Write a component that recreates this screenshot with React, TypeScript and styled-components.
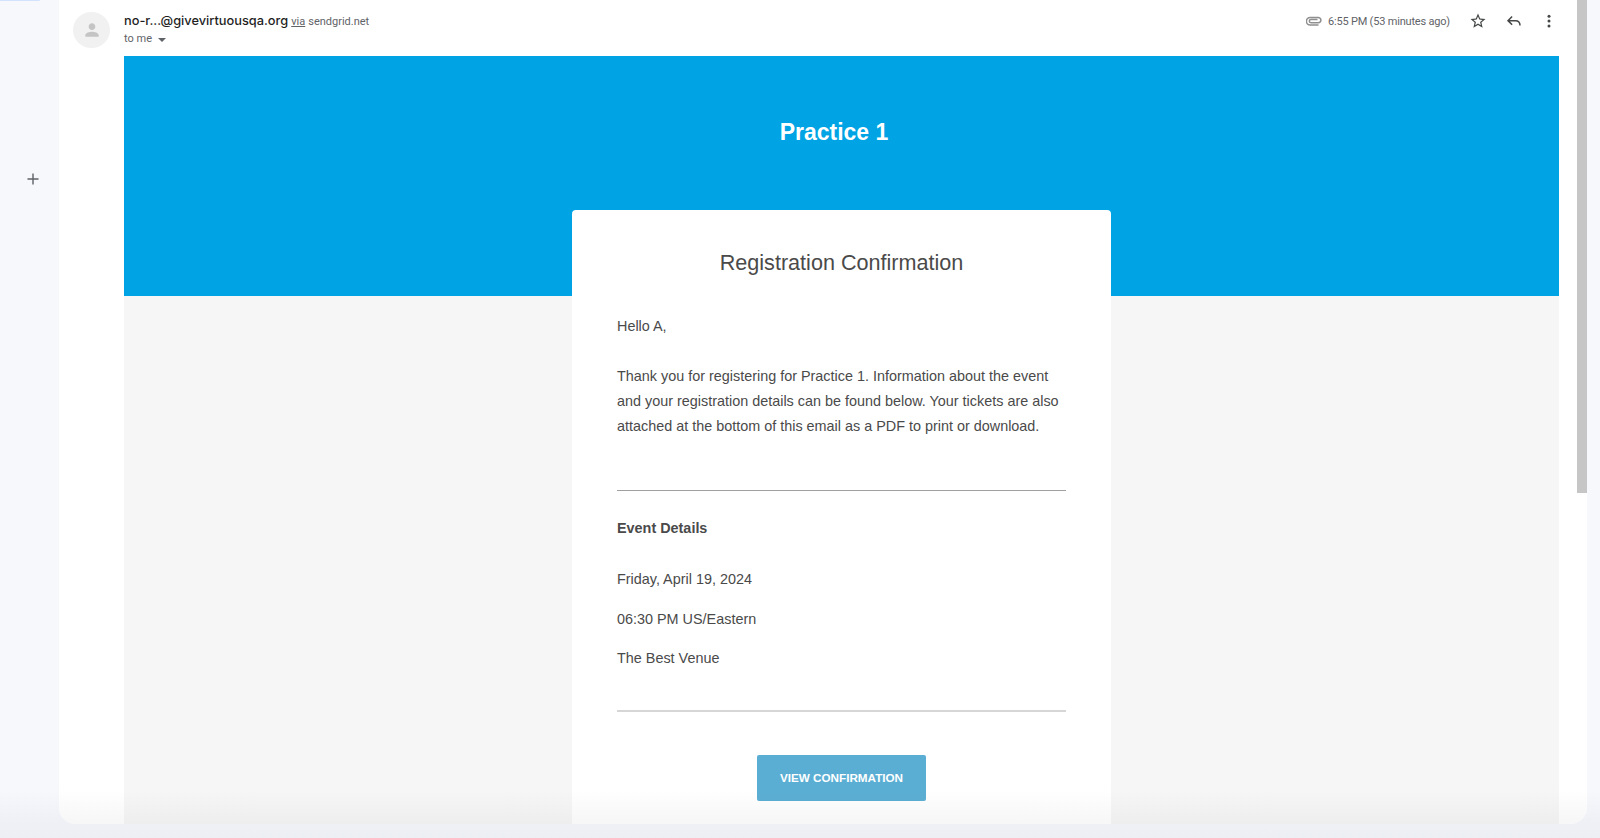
import styled, { createGlobalStyle } from 'styled-components';

const GlobalStyle = createGlobalStyle`
    html, body {
        margin: 0;
        padding: 0;
        height: 100%;
        overflow: hidden;
        background-color: #f6f8fc;
    }
`;

const Page = styled.div`
    position: relative;
    display: flex;
    width: 1600px;
    height: 838px;
    overflow: hidden;
    background-color: #f6f8fc;
`;

const Sidebar = styled.aside`
    flex: 0 0 59px;
    display: flex;
    flex-direction: column;
    align-items: flex-start;
`;

const ActiveTab = styled.div`
    width: 40px;
    height: 1px;
    background-color: #d3e3fd;
    border-radius: 0 0 4px 0;
`;

const AddButton = styled.button`
    margin: 170px 0 0 25px;
    padding: 0;
    width: 16px;
    height: 16px;
    display: flex;
    align-items: center;
    justify-content: center;
    color: #5f6368;
    background: none;
    border: 0;
`;

const Panel = styled.main`
    position: relative;
    flex: 0 0 1528px;
    height: 824px;
    overflow: hidden;
    background-color: #ffffff;
    border-radius: 0 0 16px 16px;
`;

const ScrollThumb = styled.div`
    position: absolute;
    top: 0;
    right: 0;
    width: 10px;
    height: 493px;
    background-color: #c6c6c6;
`;

const MailHeader = styled.header`
    display: flex;
    align-items: flex-start;
    height: 56px;
    box-sizing: border-box;
    padding: 12px 29px 0 14px;
`;

const Avatar = styled.div`
    flex: 0 0 37px;
    height: 36px;
    display: flex;
    align-items: center;
    justify-content: center;
    margin-right: 14px;
    color: #c4c4c4;
    background-color: #f1f1f1;
    border-radius: 50%;
`;

const SenderBlock = styled.div`
    flex: 1;
    margin-top: 1px;
    font-family: 'Roboto', 'Liberation Sans', sans-serif;
`;

const SenderLine = styled.div`
    display: flex;
    align-items: baseline;
    height: 18px;
    font-size: 11px;
    color: #5f6368;
`;

const SenderName = styled.span`
    margin-right: 3px;
    font-family: 'Inter', 'Roboto', sans-serif;
    font-size: 12.8px;
    font-weight: 500;
    color: #1f1f1f;
`;

const ViaLink = styled.span`
    margin-right: 3px;
    text-decoration: underline;
`;

const Recipient = styled.div`
    display: flex;
    align-items: center;
    gap: 6px;
    margin-top: 1px;
    font-size: 11px;
    color: #5f6368;
`;

const Caret = styled.span`
    width: 0;
    height: 0;
    margin-top: 2px;
    border-left: 4px solid transparent;
    border-right: 4px solid transparent;
    border-top: 4px solid #5f6368;
`;

const MetaRow = styled.div`
    display: flex;
    align-items: center;
    height: 18px;
    color: #444746;
    font-family: 'Roboto', 'Liberation Sans', sans-serif;
`;

const Clip = styled.span`
    display: flex;
    margin-right: 6px;
    color: #8f8f8f;
`;

const TimeStamp = styled.span`
    margin-right: 19px;
    font-size: 11px;
    letter-spacing: -0.19px;
    color: #5f6368;
`;

const IconButton = styled.span`
    display: flex;
    align-items: center;
    justify-content: center;
    width: 18px;
    height: 18px;
    margin-left: ${(props: { $gap: number }) => props.$gap}px;
`;

const MailBody = styled.div`
    margin: 0 28px 0 65px;
    height: 768px;
    background-color: #f6f6f6;
`;

const Banner = styled.div`
    height: 240px;
    box-sizing: border-box;
    padding-top: 59px;
    padding-right: 15px;
    text-align: center;
    font-family: 'Liberation Sans', Arial, sans-serif;
    font-size: 23px;
    font-weight: 700;
    line-height: 34px;
    color: #ffffff;
    background-color: #00a4e4;
`;

const Card = styled.section`
    position: relative;
    width: 539px;
    height: 700px;
    box-sizing: border-box;
    margin: -86px 0 0 448px;
    padding: 37px 45px 0;
    font-family: 'Liberation Sans', Arial, sans-serif;
    font-size: 14.4px;
    line-height: 25px;
    color: #4a4a4a;
    background-color: #ffffff;
    border-radius: 4px 4px 0 0;
`;

const CardTitle = styled.h1`
    margin: 0 0 35px;
    text-align: center;
    font-size: 21.6px;
    font-weight: 400;
    line-height: 32px;
`;

const Paragraph = styled.p`
    margin: 0 0 ${(props: { $after: number }) => props.$after}px;
`;

const Rule = styled.hr<{ $light?: boolean }>`
    margin: 0;
    border: 0;
    height: ${(props) => (props.$light ? '2px' : '1px')};
    background-color: ${(props) => (props.$light ? '#d6d6d6' : '#a0a0a0')};
`;

const SectionTitle = styled.h2`
    margin: 25px 0 26px;
    font-size: 14.4px;
    font-weight: 700;
    line-height: 25px;
`;

const ButtonRow = styled.div`
    display: flex;
    justify-content: center;
    margin-top: 43px;
`;

const ConfirmButton = styled.a`
    display: flex;
    align-items: center;
    justify-content: center;
    width: 169px;
    height: 46px;
    box-sizing: border-box;
    padding-bottom: 2px;
    font-size: 11.7px;
    font-weight: 700;
    color: #ffffff;
    background-color: #5baed3;
    border-radius: 2px;
`;

const BottomFade = styled.div`
    position: absolute;
    left: 0;
    right: 0;
    bottom: 0;
    height: 48px;
    background: linear-gradient(rgba(60, 64, 90, 0), rgba(60, 64, 90, 0.04) 60%, rgba(60, 64, 90, 0.05));
    pointer-events: none;
`;

export default function App() {
    return (
        <Page>
            <GlobalStyle />
            <Sidebar>
                <ActiveTab />
                <AddButton aria-label="Add">
                    <svg width="14" height="14" viewBox="0 0 14 14">
                        <path d="M7 1.5v11M1.5 7h11" stroke="currentColor" strokeWidth="1.4" fill="none" />
                    </svg>
                </AddButton>
            </Sidebar>
            <Panel>
                <MailHeader>
                    <Avatar>
                        <svg width="20" height="20" viewBox="0 0 24 24" fill="currentColor">
                            <path d="M12 12c2.21 0 4-1.79 4-4s-1.79-4-4-4-4 1.79-4 4 1.79 4 4 4zm0 2c-2.67 0-8 1.34-8 4v2h16v-2c0-2.66-5.33-4-8-4z" />
                        </svg>
                    </Avatar>
                    <SenderBlock>
                        <SenderLine>
                            <SenderName>no-r...@givevirtuousqa.org</SenderName>
                            <ViaLink>via</ViaLink>
                            <span>sendgrid.net</span>
                        </SenderLine>
                        <Recipient>
                            to me <Caret />
                        </Recipient>
                    </SenderBlock>
                    <MetaRow>
                        <Clip>
                            <svg width="16" height="11" viewBox="0 0 16 11" fill="none" stroke="currentColor" strokeWidth="1.5">
                                <path d="M11.5 3.4H5a1.6 1.6 0 0 0 0 3.4h7.2a2.7 2.7 0 0 0 0-5.4H4.2a3.5 3.5 0 0 0 0 7.6h8.3" />
                            </svg>
                        </Clip>
                        <TimeStamp>6:55 PM (53 minutes ago)</TimeStamp>
                        <IconButton $gap={0}>
                            <svg width="18" height="18" viewBox="0 0 24 24" fill="#444746">
                                <path d="M22 9.24l-7.19-.62L12 2 9.19 8.63 2 9.24l5.46 4.73L5.82 21 12 17.27 18.18 21l-1.63-7.03L22 9.24zM12 15.4l-3.76 2.27 1-4.28-3.32-2.88 4.38-.38L12 6.1l1.71 4.04 4.38.38-3.32 2.88 1 4.28L12 15.4z" />
                            </svg>
                        </IconButton>
                        <IconButton $gap={18}>
                            <svg width="18" height="18" viewBox="0 0 24 24" fill="none" stroke="#444746" strokeWidth="2">
                                <path d="M9.5 6L4 11.5 9.5 17M4 11.5h10c3.5 0 6 2.2 6 6.5" />
                            </svg>
                        </IconButton>
                        <IconButton $gap={17}>
                            <svg width="18" height="18" viewBox="0 0 24 24" fill="#444746">
                                <circle cx="12" cy="5.5" r="2" />
                                <circle cx="12" cy="12" r="2" />
                                <circle cx="12" cy="18.5" r="2" />
                            </svg>
                        </IconButton>
                    </MetaRow>
                </MailHeader>
                <MailBody>
                    <Banner>Practice 1</Banner>
                    <Card>
                        <CardTitle>Registration Confirmation</CardTitle>
                        <Paragraph $after={25}>Hello A,</Paragraph>
                        <Paragraph $after={51}>
                            Thank you for registering for Practice 1. Information about the event
                            <br />
                            and your registration details can be found below. Your tickets are also
                            <br />
                            attached at the bottom of this email as a PDF to print or download.
                        </Paragraph>
                        <Rule />
                        <SectionTitle>Event Details</SectionTitle>
                        <Paragraph $after={15}>Friday, April 19, 2024</Paragraph>
                        <Paragraph $after={14}>06:30 PM US/Eastern</Paragraph>
                        <Paragraph $after={39}>The Best Venue</Paragraph>
                        <Rule $light />
                        <ButtonRow>
                            <ConfirmButton>VIEW CONFIRMATION</ConfirmButton>
                        </ButtonRow>
                    </Card>
                </MailBody>
                <ScrollThumb />
            </Panel>
            <BottomFade />
        </Page>
    );
}
